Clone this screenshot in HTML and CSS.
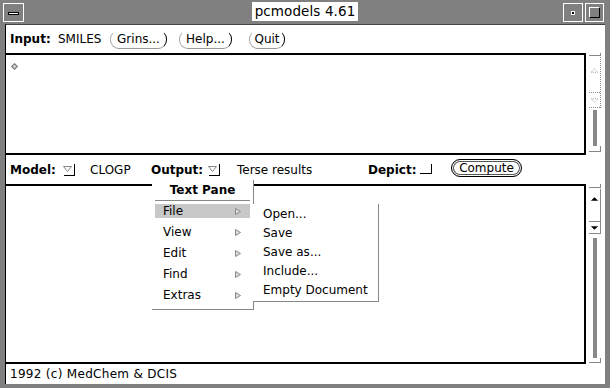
FILE: index.html
```html
<!DOCTYPE html>
<html lang="en">
<head>
  <meta charset="UTF-8">
  <title>pcmodels 4.61</title>
  <link rel="stylesheet" href="styles.css">
</head>
<body>
  <div class="window">
    <div class="titlebar">
      <div class="tb-left">
        <div class="tb-box close"><span class="dash"></span></div>
      </div>
      <div class="tb-title">pcmodels 4.61</div>
      <div class="tb-right">
        <div class="tb-box wide"><span class="dot"></span></div>
        <div class="tb-box"><span class="square"></span></div>
      </div>
    </div>

    <div class="frame">
      <!-- input row -->
      <div class="row row1">
        <span class="lbl w-input">Input:</span>
        <span class="w-smiles">SMILES</span>
        <span class="btn w-grins">Grins...</span>
        <span class="btn w-help">Help...</span>
        <span class="btn w-quit">Quit</span>
      </div>

      <div class="pane-row">
        <div class="text small">
          <span class="caret"></span>
        </div>
        <div class="sb sb-off">
          <div class="anchor top"></div>
          <div class="elev">
            <div class="up">
              <svg width="12" height="6" viewBox="0 0 12 6"><path d="M2.5 5.5h7L6 1.5z" fill="none" stroke="#999" stroke-dasharray="1 1"/></svg>
            </div>
            <div class="down">
              <svg width="12" height="6" viewBox="0 0 12 6"><path d="M2.5 1.5h7L6 5.5z" fill="none" stroke="#999" stroke-dasharray="1 1"/></svg>
            </div>
          </div>
          <div class="cable"></div>
          <div class="anchor bottom"></div>
        </div>
      </div>

      <!-- model row -->
      <div class="row row2">
        <span class="lbl w-model">Model:</span>
        <span class="menubtn">
          <svg width="15" height="14" viewBox="0 0 15 14"><path d="M1.5 4.5h8l-4 5z" fill="none" stroke="#888"/><path d="M12.5 2v11M2 13.5h11" stroke="#000"/></svg>
        </span>
        <span class="w-clogp">CLOGP</span>
        <span class="lbl w-output">Output:</span>
        <span class="menubtn">
          <svg width="15" height="14" viewBox="0 0 15 14"><path d="M1.5 4.5h8l-4 5z" fill="none" stroke="#888"/><path d="M12.5 2v11M2 13.5h11" stroke="#000"/></svg>
        </span>
        <span class="w-terse">Terse results</span>
        <span class="lbl w-depict">Depict:</span>
        <span class="check">
          <svg width="14" height="13" viewBox="0 0 14 13"><path d="M1 11.5h11M12.5 2v10" stroke="#000"/></svg>
        </span>
        <span class="btn default w-compute">Compute</span>
      </div>

      <div class="pane-row">
        <div class="text big"></div>
        <div class="sb sb-on">
          <div class="anchor top"></div>
          <div class="elev">
            <div class="up">
              <svg width="12" height="6" viewBox="0 0 12 6"><path d="M2 5h8L6 1z" fill="#000"/></svg>
            </div>
            <div class="down">
              <svg width="12" height="6" viewBox="0 0 12 6"><path d="M2 1h8L6 5z" fill="#000"/></svg>
            </div>
          </div>
          <div class="cable"></div>
          <div class="anchor bottom"></div>
        </div>
      </div>

      <div class="footer">1992 (c) MedChem &amp; DCIS</div>
    </div>

    <!-- pinned popup menu -->
    <div class="menu">
      <div class="menu-title">Text Pane</div>
      <div class="mi hl"><span>File</span><svg class="arr" width="6" height="7" viewBox="0 0 6 7"><path d="M.5 .5v6l5-3z" fill="#ddd" stroke="#888"/></svg></div>
      <div class="mi"><span>View</span><svg class="arr" width="6" height="7" viewBox="0 0 6 7"><path d="M.5 .5v6l5-3z" fill="#ddd" stroke="#888"/></svg></div>
      <div class="mi"><span>Edit</span><svg class="arr" width="6" height="7" viewBox="0 0 6 7"><path d="M.5 .5v6l5-3z" fill="#ddd" stroke="#888"/></svg></div>
      <div class="mi"><span>Find</span><svg class="arr" width="6" height="7" viewBox="0 0 6 7"><path d="M.5 .5v6l5-3z" fill="#ddd" stroke="#888"/></svg></div>
      <div class="mi"><span>Extras</span><svg class="arr" width="6" height="7" viewBox="0 0 6 7"><path d="M.5 .5v6l5-3z" fill="#ddd" stroke="#888"/></svg></div>
    </div>
    <div class="submenu">
      <div class="si">Open...</div>
      <div class="si">Save</div>
      <div class="si">Save as...</div>
      <div class="si">Include...</div>
      <div class="si">Empty Document</div>
    </div>
  </div>
</body>
</html>
```

FILE: styles.css
```css
body {
  margin: 0;
  font-family: "DejaVu Sans", Verdana, sans-serif;
  font-size: 12px;
  color: #000;
}

/* window frame: stipple gray */
.window {
  position: relative;
  width: 610px;
  height: 388px;
  background: #808080;
  display: flex;
  flex-direction: column;
}

/* title bar */
.titlebar {
  height: 24px;
  display: grid;
  grid-template-columns: 1fr auto 1fr;
  align-items: start;
}

.tb-left {
  padding: 3px 0 0 3px;
}

.tb-right {
  display: flex;
  justify-content: flex-end;
  gap: 2px;
  padding: 3px 6px 0 0;
}

.tb-box {
  width: 17px;
  height: 17px;
  border: 1px solid #fff;
  display: flex;
  align-items: center;
  justify-content: center;
}

.tb-box.close {
  width: 19px;
}

.tb-box.wide {
  width: 18px;
}

.dash {
  width: 9px;
  height: 1px;
  background: #fff;
  border: 1px solid #000;
  margin-top: 2px;
}

.dot {
  width: 2px;
  height: 2px;
  background: #000;
  border: 1px solid #fff;
}

.square {
  width: 9px;
  height: 9px;
  border: 1px solid #fff;
  border-right-color: #000;
  border-bottom-color: #000;
}

.tb-title {
  margin-top: 2px;
  height: 19px;
  line-height: 19px;
  padding: 0 3px;
  background: #fff;
  font-size: 13.5px;
  letter-spacing: 0.1px;
}

/* main frame */
.frame {
  flex: 1;
  margin: 0 5px 4px 5px;
  background: #fff;
  border-left: 1px solid #000;
  border-top: 1px solid #444;
  display: flex;
  flex-direction: column;
}

.row {
  display: flex;
  align-items: center;
  padding-left: 4px;
}

.row1 {
  height: 28px;
}

.row2 {
  height: 29px;
}

.lbl {
  font-weight: bold;
}

.w-input { width: 48px; }
.w-smiles { width: 52px; }
.w-model { width: 52px; }
.w-clogp { width: 61px; }
.w-output { width: 56px; }
.w-terse { width: 131px; }
.w-depict { width: 51px; }

.btn {
  box-sizing: border-box;
  height: 19px;
  line-height: 17px;
  border-radius: 9px;
  border: 1px solid transparent;
  border-left-color: #aaa;
  border-bottom-color: #999;
  border-right-color: #000;
  text-align: center;
  margin-top: 1px;
}

.w-grins { width: 57px; margin-right: 12px; }
.w-help { width: 53px; margin-right: 17px; }
.w-quit { width: 36px; }

.btn.default {
  height: 18px;
  line-height: 16px;
  border: 1px solid #000;
  box-shadow: inset 0 0 0 1px #fff, inset 0 0 0 2px #555;
  margin-top: -3px;
}

.w-compute { width: 71px; }

.menubtn {
  width: 15px;
  height: 14px;
  margin-right: 12px;
  margin-top: -2px;
}

.menubtn + .w-clogp {
  margin-left: 1px;
}

.menubtn + .w-terse {
  margin-left: 3px;
}

.check {
  width: 14px;
  height: 13px;
  margin-right: 18px;
  margin-top: -2px;
}

/* text panes */
.pane-row {
  display: flex;
}

.text {
  box-sizing: border-box;
  width: 580px;
  border: 2px solid #000;
  border-left: 0;
}

.text.small {
  height: 102px;
}

.text.big {
  height: 180px;
}

.caret {
  display: block;
  width: 3px;
  height: 3px;
  margin: 9px 0 0 6px;
  border: 1px solid #777;
  background: #ccc;
  transform: rotate(45deg);
}

/* scrollbars */
.sb {
  box-sizing: border-box;
  width: 19px;
  padding-left: 3px;
  display: flex;
  flex-direction: column;
}

.sb > div {
  width: 12px;
}

.anchor {
  box-sizing: border-box;
  border-right: 1px solid #888;
  border-bottom: 1px solid #888;
}

.anchor.top {
  height: 3px;
  margin-top: 0;
}

.anchor.bottom {
  height: 6px;
}

.elev {
  box-sizing: border-box;
  margin-top: 1px;
  border-right: 1px solid #888;
}

.elev .up,
.elev .down {
  display: flex;
  align-items: center;
  border-bottom: 1px solid #888;
}

.elev svg {
  display: block;
}

.cable {
  flex: 1;
  margin: 2px 0 0 4px;
  width: 4px !important;
  background: #888;
}

.sb-off .elev {
  border-right-style: dotted;
}

.sb-off .up {
  height: 35px;
  border-bottom-style: dotted;
}

.sb-off .down {
  height: 14px;
  border-bottom-style: dotted;
}

.sb-off .anchor.bottom {
  margin-bottom: 3px;
}

.sb-off .up svg {
  margin-top: -10px;
}

.sb-on .anchor.top {
  height: 4px;
}

.sb-on .up {
  height: 32px;
}

.sb-on .up svg {
  margin-top: -12px;
}

.sb-on .down {
  height: 11px;
}

.sb-on .cable {
  margin-top: 4px;
}

.sb-on .anchor.bottom {
  height: 5px;
  margin-bottom: 1px;
}

.footer {
  flex: 1;
  padding-left: 4px;
  line-height: 20px;
  letter-spacing: 0.3px;
}

/* popup menu */
.menu {
  position: absolute;
  left: 152px;
  top: 180px;
  width: 101px;
  height: 129px;
  background: #fff;
  border-right: 1px solid #888;
  border-bottom: 1px solid #888;
}

.menu-title {
  height: 20px;
  line-height: 20px;
  margin: 0 3px;
  text-align: center;
  font-weight: bold;
  border-bottom: 1px solid #888;
}

.mi {
  height: 14px;
  padding: 3px 0 4px;
  margin: 0 3px;
  display: flex;
  align-items: center;
  justify-content: space-between;
  background-clip: content-box;
}

.mi span {
  margin-left: 8px;
}

.mi .arr {
  margin-right: 9px;
}

.mi.hl {
  background-color: #c8c8c8;
}

.submenu {
  position: absolute;
  left: 253px;
  top: 204px;
  width: 125px;
  height: 97px;
  background: #fff;
  border-right: 1px solid #888;
  border-bottom: 1px solid #888;
}

.si {
  padding-left: 10px;
  height: 19px;
  line-height: 19px;
}

.si:first-child {
  margin-top: 1px;
}
```
